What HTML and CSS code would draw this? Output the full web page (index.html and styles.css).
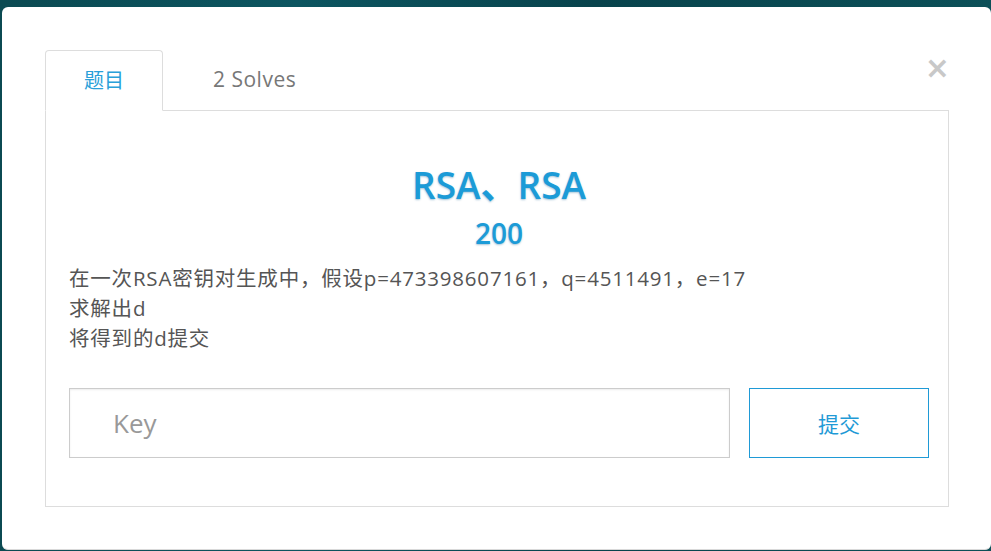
FILE: index.html
```html
<!DOCTYPE html>
<html lang="zh-CN">
<head>
<meta charset="utf-8">
<title>RSA、RSA</title>
<link rel="stylesheet" href="styles.css">
</head>
<body>
<div class="backdrop">
  <div class="modal">
    <button class="close" type="button" aria-label="Close">&times;</button>
    <ul class="tabs">
      <li class="tab active">题目</li>
      <li class="tab">2 Solves</li>
    </ul>
    <div class="pane">
      <h2 class="title">RSA、RSA</h2>
      <h3 class="points">200</h3>
      <div class="desc">
        <p>在一次RSA密钥对生成中，假设p=473398607161，q=4511491，e=17</p>
        <p>求解出d</p>
        <p>将得到的d提交</p>
      </div>
      <form class="submit-row">
        <input class="key" type="text" placeholder="Key">
        <button class="btn" type="button">提交</button>
      </form>
    </div>
  </div>
</div>
</body>
</html>
```
FILE: styles.css
```css
html, body {
  margin: 0;
  padding: 0;
  height: 100%;
  overflow: hidden;
}
body {
  background: #0a3f48;
  font-family: "Open Sans", "Noto Sans CJK SC", sans-serif;
}
.backdrop {
  height: 100%;
  padding: 7px 0 0 2px;
  box-sizing: border-box;
  background: linear-gradient(90deg, #0b4a52 0%, #0c5560 30%, #08434c 60%, #0c5058 100%);
}
.modal {
  position: relative;
  background: #fff;
  border-radius: 6px;
  height: 543px;
  box-sizing: border-box;
  border-bottom: 1px solid #d9d9d9;
  padding: 43px 42px 0 43px;
}
.close {
  position: absolute;
  top: 44px;
  right: 41px;
  border: 0;
  background: none;
  padding: 0;
  font-family: "DejaVu Sans", sans-serif;
  font-size: 30px;
  line-height: 34px;
  color: #c8c8c8;
  font-weight: bold;
}
.tabs {
  display: flex;
  list-style: none;
  margin: 0;
  padding: 0;
  height: 61px;
}
.tab {
  font-size: 21px;
  letter-spacing: 0.5px;
  line-height: 59px;
  color: #777;
  padding: 0 40px 0 50px;
}
.tab.active {
  font-size: 20px;
  letter-spacing: 0;
  color: #29a0d9;
  padding: 0 38px;
  border: 1px solid #ddd;
  border-bottom: 1px solid #fff;
  border-radius: 4px 4px 0 0;
  background: #fff;
  position: relative;
  z-index: 1;
}
.pane {
  margin-top: -1px;
  border: 1px solid #ddd;
  height: 397px;
  box-sizing: border-box;
  padding: 52px 19px 0 23px;
}
.title {
  margin: 0;
  text-align: center;
  font-size: 37px;
  line-height: 44px;
  font-weight: 600;
  color: #1c9bd7;
  text-shadow: 0 1px 2px rgba(0, 90, 140, 0.35);
}
.points {
  margin: 8px 0 0;
  text-align: center;
  font-size: 28px;
  line-height: 36px;
  font-weight: 600;
  color: #1c9bd7;
  text-shadow: 0 1px 2px rgba(0, 90, 140, 0.35);
}
.desc {
  margin-top: 12px;
  color: #555;
  font-size: 20.5px;
  letter-spacing: 0.8px;
  line-height: 30px;
}
.desc p {
  margin: 0;
}
.submit-row {
  display: flex;
  gap: 19px;
  margin: 35px 0 0;
}
.key {
  flex: 0 0 661px;
  height: 70px;
  box-sizing: border-box;
  border: 1px solid #ccc;
  box-shadow: inset 0 1px 2px rgba(0, 0, 0, 0.08);
  padding: 0 43px;
  font-family: "Open Sans", "Noto Sans CJK SC", sans-serif;
  font-size: 26px;
  color: #555;
  outline: none;
}
.key::placeholder {
  color: #999;
}
.btn {
  flex: 0 0 180px;
  height: 70px;
  box-sizing: border-box;
  border: 1px solid #1f9ad6;
  background: #fff;
  color: #1f9ad6;
  font-family: "Noto Sans CJK SC", sans-serif;
  font-size: 21px;
}
```
